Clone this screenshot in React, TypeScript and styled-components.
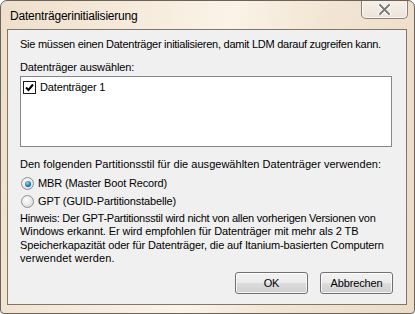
import React from "react";
import styled, { createGlobalStyle } from "styled-components";

const Global = createGlobalStyle`
  html, body { margin: 0; padding: 0; background: #ffffff; }
  body { font-family: "Liberation Sans", Arial, sans-serif; font-size: 11px; color: #000; }
  #root { width: 415px; height: 314px; }
`;

const Window = styled.div`
  box-sizing: border-box;
  width: 415px;
  height: 314px;
  display: flex;
  flex-direction: column;
  border: 1px solid #6d6259;
  border-radius: 7px 7px 4px 4px;
  background: linear-gradient(100deg, #eedfcc 0%, #f6ebdc 30%, #fbf3e8 50%, #f2e5d3 70%, #ebdcc8 100%);
  overflow: hidden;
`;

const TitleBar = styled.div`
  flex-shrink: 0;
  height: 28px;
  display: flex;
  justify-content: space-between;
  align-items: flex-start;
  padding: 0 6px 0 9px;
`;

const Title = styled.div`
  font-size: 12px;
  letter-spacing: -0.2px;
  line-height: 14px;
  margin-top: 8px;
  color: #000;
`;

const CloseButton = styled.div`
  box-sizing: border-box;
  width: 47px;
  height: 19px;
  margin-top: -1px;
  border: 1px solid #8c8075;
  border-top: none;
  border-radius: 0 0 5px 5px;
  background: linear-gradient(#f7f1ea, #ece3d8);
  box-shadow: inset 0 0 0 1px rgba(255,255,255,0.7);
  display: flex;
  align-items: center;
  justify-content: center;
`;

const Panel = styled.div`
  flex: 1;
  min-height: 0;
  margin: 0 7px 8px 6px;
  border: 1px solid #7e7770;
  background: #f0f0f0;
  padding: 8px 13px 10px 12px;
  display: flex;
  flex-direction: column;
`;

const Line = styled.div<{ $mt?: number; $ls?: number }>`
  line-height: 13px;
  white-space: nowrap;
  letter-spacing: ${(p) => p.$ls ?? -0.15}px;
  margin-top: ${(p) => p.$mt ?? 0}px;
`;

const ListBox = styled.div`
  box-sizing: border-box;
  height: 71px;
  margin-top: 2px;
  margin-right: 1px;
  border: 1px solid #828790;
  background: #fff;
  padding: 4px 2px;
`;

const ListItem = styled.div`
  display: flex;
  align-items: center;
  gap: 4px;
  line-height: 13px;
  letter-spacing: -0.15px;
`;

const Check = styled.div`
  box-sizing: border-box;
  width: 13px;
  height: 13px;
  border: 1px solid #1c1c1c;
  background: #fff;
  display: flex;
  align-items: center;
  justify-content: center;
`;

const RadioRow = styled.div<{ $mt?: number }>`
  display: flex;
  align-items: center;
  gap: 4px;
  line-height: 13px;
  letter-spacing: -0.15px;
  margin-top: ${(p) => p.$mt ?? 0}px;
  padding-left: 1px;
`;

const Radio = styled.div<{ $on?: boolean }>`
  box-sizing: border-box;
  width: 13px;
  height: 13px;
  border-radius: 50%;
  border: 1px solid #8e8f8f;
  background: radial-gradient(circle at 40% 35%, #ffffff 0%, #e4e4e4 60%, #cfcfcf 100%);
  display: flex;
  align-items: center;
  justify-content: center;
  &::after {
    content: "";
    display: ${(p) => (p.$on ? "block" : "none")};
    width: 6px;
    height: 6px;
    border-radius: 50%;
    background: radial-gradient(circle at 40% 35%, #8fdcf8 0%, #1a6ea6 60%, #0f3f6e 100%);
  }
`;

const Note = styled.div`
  margin-top: 4px;
`;

const NoteLine = styled.div<{ $ls?: number }>`
  line-height: 13.4px;
  white-space: nowrap;
  letter-spacing: ${(p) => p.$ls ?? -0.15}px;
`;

const ButtonRow = styled.div`
  margin-top: auto;
  display: flex;
  justify-content: flex-end;
  gap: 12px;
`;

const Button = styled.div`
  box-sizing: border-box;
  width: 73px;
  height: 22px;
  border: 1px solid #707070;
  border-radius: 3px;
  background: linear-gradient(#f2f2f2 0%, #ebebeb 49%, #dddddd 50%, #cfcfcf 100%);
  box-shadow: inset 0 0 0 1px rgba(255,255,255,0.8);
  display: flex;
  align-items: center;
  justify-content: center;
  letter-spacing: -0.15px;
`;

const noteLines: { text: string; ls?: number }[] = [
  { text: "Hinweis: Der GPT-Partitionsstil wird nicht von allen vorherigen Versionen von", ls: -0.25 },
  { text: "Windows erkannt. Er wird empfohlen für Datenträger mit mehr als 2 TB", ls: -0.1 },
  { text: "Speicherkapazität oder für Datenträger, die auf Itanium-basierten Computern", ls: -0.13 },
  { text: "verwendet werden.", ls: 0.1 },
];

export default function App() {
  return (
    <>
      <Global />
      <Window>
        <TitleBar>
          <Title>Datenträgerinitialisierung</Title>
          <CloseButton>
            <svg width="13" height="11" viewBox="0 0 13 11">
              <path d="M2 1 L11 10 M11 1 L2 10" stroke="#ffffff" strokeWidth="4" strokeLinecap="round" />
              <path d="M2 1 L11 10 M11 1 L2 10" stroke="#7a7a7a" strokeWidth="2" strokeLinecap="round" />
            </svg>
          </CloseButton>
        </TitleBar>
        <Panel>
          <Line $ls={-0.26}>Sie müssen einen Datenträger initialisieren, damit LDM darauf zugreifen kann.</Line>
          <Line $mt={10} $ls={-0.12}>Datenträger auswählen:</Line>
          <ListBox>
            <ListItem>
              <Check>
                <svg width="9" height="9" viewBox="0 0 9 9">
                  <path d="M1 4.5 L3.5 7 L8 1.5" stroke="#000" strokeWidth="2" fill="none" />
                </svg>
              </Check>
              <span>Datenträger 1</span>
            </ListItem>
          </ListBox>
          <Line $mt={11} $ls={0.02}>Den folgenden Partitionsstil für die ausgewählten Datenträger verwenden:</Line>
          <RadioRow $mt={6}>
            <Radio $on />
            <span>MBR (Master Boot Record)</span>
          </RadioRow>
          <RadioRow $mt={5}>
            <Radio />
            <span>GPT (GUID-Partitionstabelle)</span>
          </RadioRow>
          <Note>
            {noteLines.map((l) => (
              <NoteLine key={l.text} $ls={l.ls}>{l.text}</NoteLine>
            ))}
          </Note>
          <ButtonRow>
            <Button>OK</Button>
            <Button>Abbrechen</Button>
          </ButtonRow>
        </Panel>
      </Window>
    </>
  );
}
